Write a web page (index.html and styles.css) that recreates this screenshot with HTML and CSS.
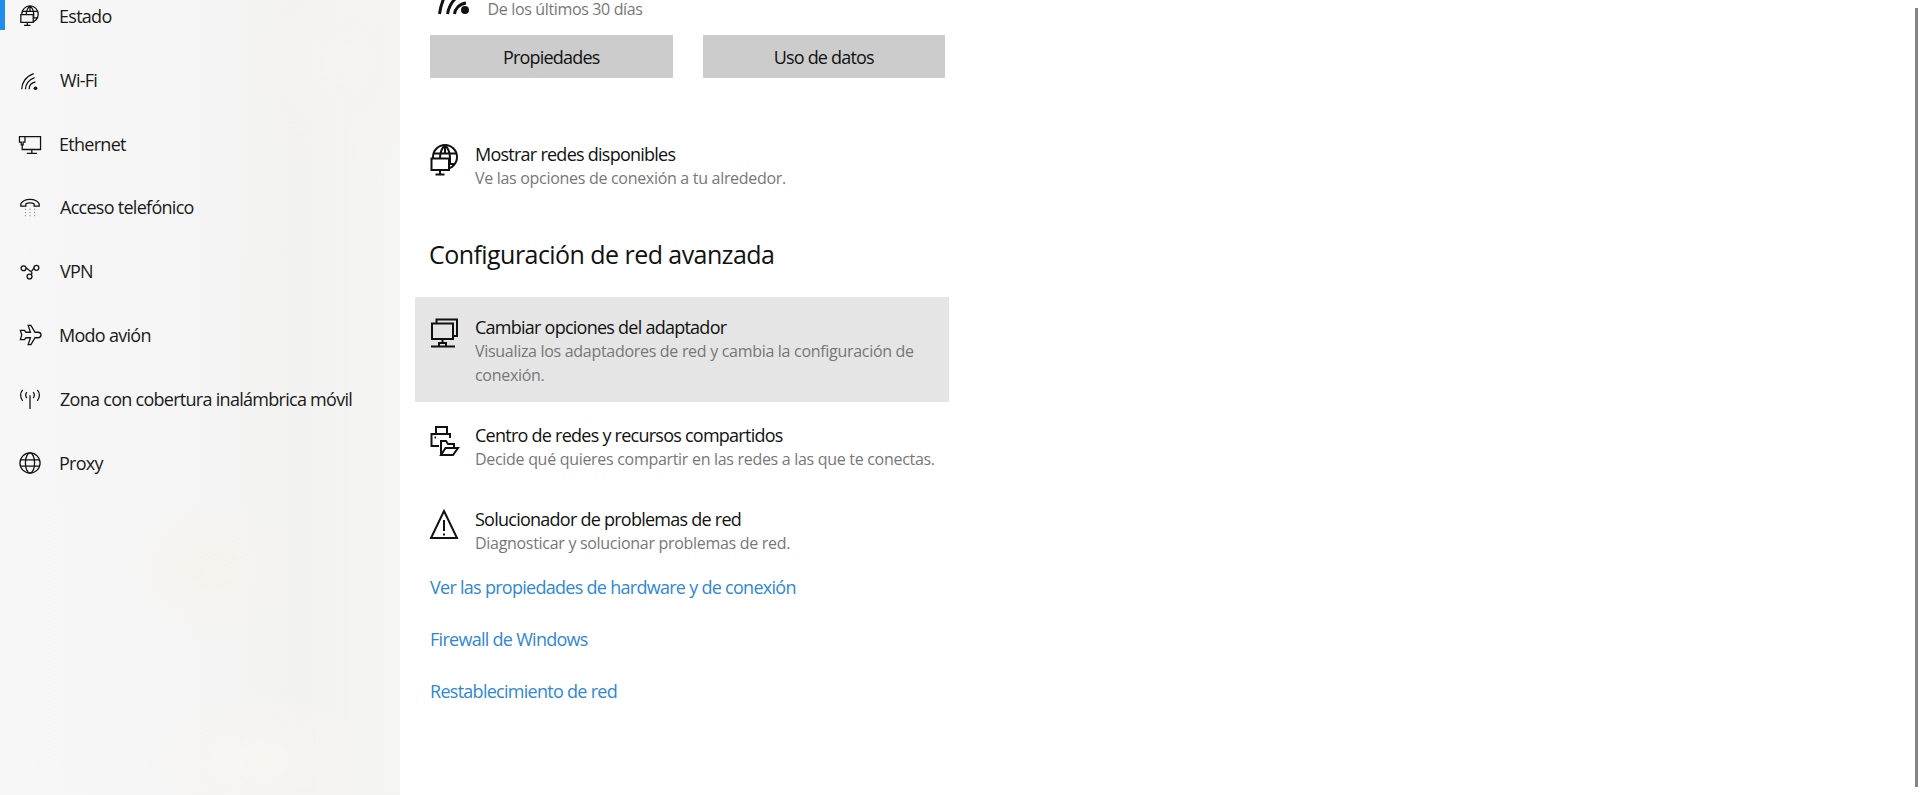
FILE: index.html
```html
<!DOCTYPE html>
<html lang="es">
<head>
<meta charset="utf-8">
<title>Estado de red</title>
<link rel="stylesheet" href="styles.css">
</head>
<body>
<div class="app">
  <nav class="sidebar">
    <a class="nav-item active">
      <svg class="nav-icon" viewBox="0 0 24 24"><circle cx="12" cy="10" r="9"/><path d="M3.600 7H20.400M12 1V7M12 1C9 3.500 8 6.500 8 10M12 1C15 3.500 16 6.500 16 10V14H20"/><path class="fill-bg" d="M2 10.500H15.500V19H2Z"/><path d="M9 19V22M5.500 22.300H12.500"/></svg>
      <span>Estado</span>
    </a>
    <a class="nav-item">
      <svg class="nav-icon" viewBox="0 0 24 24"><path d="M3 22C3 15 7.500 8 16 5M7 22C7 17 10.500 11.500 17 9.500M11 22C11 18.500 13.500 15 18 14"/><circle class="dot" cx="18" cy="21" r="2"/></svg>
      <span class="nudge">Wi-Fi</span>
    </a>
    <a class="nav-item">
      <svg class="nav-icon" viewBox="0 0 24 24"><path d="M6.500 4H23.500V18H6.500M0.500 10V4H6.500V10H4.500V13H2.500V10ZM3.500 13V18H6.500M14 18V22M8.500 22.300H19.500"/></svg>
      <span>Ethernet</span>
    </a>
    <a class="nav-item">
      <svg class="nav-icon" viewBox="0 0 24 24"><path d="M2 11V8.500C5.500 2 18.500 2 22 8.500V11H16.500V8.500C14.500 7.300 9.500 7.300 7.500 8.500V11Z"/><path class="dots" d="M7 14V15M12 14V15M17 14V15M7 17.500V18.500M12 17.500V18.500M17 17.500V18.500M7 21V22M12 21V22M17 21V22"/></svg>
      <span class="nudge">Acceso telefónico</span>
    </a>
    <a class="nav-item">
      <svg class="nav-icon" viewBox="0 0 24 24"><circle cx="5" cy="9" r="2.700"/><circle cx="19" cy="8.500" r="2.700"/><circle cx="11.500" cy="18" r="2.700"/><path d="M7.700 9C10 9 11 12.500 13 12.500C15 12.500 15.500 9 16.300 8.500M13.500 16C15 14 13.500 12.500 11.500 11.500"/></svg>
      <span class="nudge">VPN</span>
    </a>
    <a class="nav-item">
      <svg class="nav-icon" viewBox="0 0 24 24"><path d="M10 1.500H13L17.500 9H20.500C22.500 9 24 10.500 24 12C24 13.500 22.500 15 20.500 15H17.500L13 22.500H10L12.500 15H7.500L6 17H1.500L3 12L1.500 7H6L7.500 9H12.500Z"/></svg>
      <span>Modo avión</span>
    </a>
    <a class="nav-item">
      <svg class="nav-icon" viewBox="0 0 24 24"><path d="M12 8V23M8.500 4.500C7 6.500 7 9 8.500 11M15.500 4.500C17 6.500 17 9 15.500 11M4 2C1 5.500 1 10.500 4 14M20 2C23 5.500 23 10.500 20 14"/></svg>
      <span class="nudge">Zona con cobertura inalámbrica móvil</span>
    </a>
    <a class="nav-item">
      <svg class="nav-icon" viewBox="0 0 24 24"><circle cx="12" cy="12" r="11"/><ellipse cx="12" cy="12" rx="5" ry="11"/><path d="M1.500 8.500H22.500M1.500 15.500H22.500"/></svg>
      <span>Proxy</span>
    </a>
  </nav>

  <main class="content">
    <div class="usage">
      <svg class="usage-icon" viewBox="0 0 36 36"><path d="M5.500 34C6.500 27 8 21 12 14M13.500 34C14.500 28 17 23 21 19M20.500 34C21 29 25 24 32 23"/><circle class="dot" cx="31" cy="30" r="4"/></svg>
      <span class="desc">De los últimos 30 días</span>
    </div>
    <div class="buttons">
      <button class="btn">Propiedades</button>
      <button class="btn">Uso de datos</button>
    </div>

    <div class="option show-networks">
      <svg class="opt-icon" viewBox="0 0 28 32"><circle cx="15" cy="13" r="12"/><path d="M3.500 9.500H26.500M15 1V9.500M15 1C11 5 10 9 10 14M15 1C19 5 20 9 20 14V20H25"/><path class="fill-bg" d="M1.500 14.500H19V26H1.500Z"/><path d="M10 26V30M5.500 30.500H14.500"/></svg>
      <div class="opt-text">
        <div class="title">Mostrar redes disponibles</div>
        <div class="desc">Ve las opciones de conexión a tu alrededor.</div>
      </div>
    </div>

    <h2 class="heading">Configuración de red avanzada</h2>

    <div class="option highlighted">
      <svg class="opt-icon" viewBox="0 0 28 32"><path d="M6.500 6V2.500H27V19H22.500"/><path d="M2 6.500H23V22H2Z"/><path d="M12.500 22V26M9 29.500V26H16V29.500ZM1 29.500H9M16 29.500H25"/></svg>
      <div class="opt-text">
        <div class="title">Cambiar opciones del adaptador</div>
        <div class="desc">Visualiza los adaptadores de red y cambia la configuración de conexión.</div>
      </div>
    </div>

    <div class="option shared">
      <svg class="opt-icon" viewBox="0 0 28 32"><path d="M6 9V2H17V9M9 21H1.500V9H20V13"/><path d="M4.500 12.500H6"/><path d="M11 30V16H16L18 19H24V23"/><path d="M11 30H23L28 23H15.500Z"/></svg>
      <div class="opt-text">
        <div class="title">Centro de redes y recursos compartidos</div>
        <div class="desc">Decide qué quieres compartir en las redes a las que te conectas.</div>
      </div>
    </div>

    <div class="option troubleshoot">
      <svg class="opt-icon" viewBox="0 0 28 32"><path d="M14 2L27 29H1Z"/><path d="M14 11V22M14 24.500V26.500"/></svg>
      <div class="opt-text">
        <div class="title">Solucionador de problemas de red</div>
        <div class="desc">Diagnosticar y solucionar problemas de red.</div>
      </div>
    </div>

    <div class="links">
      <a class="link">Ver las propiedades de hardware y de conexión</a>
      <a class="link">Firewall de Windows</a>
      <a class="link">Restablecimiento de red</a>
    </div>
  </main>

  <div class="scrollbar"></div>
</div>
</body>
</html>
```

FILE: styles.css
```css
* { box-sizing: border-box; }
html, body { margin: 0; height: 100%; overflow: hidden; background: #fff; }
body { font-family: "Open Sans", "Liberation Sans", sans-serif; color: #111; }

.app { display: flex; height: 795px; position: relative; }

.sidebar {
  width: 400px;
  flex: none;
  overflow: hidden;
  background:
    radial-gradient(ellipse 90px 70px at 215px 570px, #f7f3ee 0%, rgba(247,243,238,0) 100%),
    radial-gradient(ellipse 110px 130px at 340px 60px, #f6f3f0 0%, rgba(246,243,240,0) 100%),
    radial-gradient(ellipse 120px 70px at 260px 760px, #f8f5f1 0%, rgba(248,245,241,0) 100%),
    linear-gradient(90deg, #f7f7f7 0%, #f5f5f5 45%, #f2f2f1 75%, #f5f5f4 100%);
}

.nav-item {
  display: flex;
  align-items: center;
  height: 63.85px;
  position: relative;
  padding-left: 19px;
  gap: 18px;
  font-size: 18px;
  letter-spacing: -0.72px;
  color: #1a1a1a;
}
.nav-item:first-child { margin-top: -16px; }
.nav-item.active::before {
  content: "";
  position: absolute;
  left: 0;
  top: 0;
  width: 5px;
  height: 46px;
  background: #1f8cf0;
}
.nudge { margin-left: 1px; }
.nav-icon { width: 22px; height: 22px; flex: none; }

svg { fill: none; stroke: #111; stroke-width: 1.4; overflow: visible; }
svg .dot { fill: #111; stroke: none; }
svg .dots { stroke-width: 1; stroke: #666; }
svg .fill-bg { fill: #f6f6f6; }
.opt-icon .fill-bg { fill: #fff; }
.opt-icon { stroke-width: 2; width: 28px; height: 32px; flex: none; }

.content { width: 560px; flex: none; padding-left: 30px; }

.usage {
  display: flex;
  align-items: flex-end;
  height: 18px;
}
.usage-icon { width: 36px; height: 36px; flex: none; margin-left: 3.5px; margin-bottom: 2px; stroke-width: 3; }
.usage .desc { margin-left: 18px; line-height: 18px; letter-spacing: -0.35px; }

.title { font-size: 18px; letter-spacing: -0.75px; line-height: 24px; color: #111; }
.desc { font-size: 16px; letter-spacing: -0.3px; line-height: 24px; color: #777; }

.buttons { display: flex; gap: 30px; margin-top: 17px; }
.btn {
  width: 242.5px;
  height: 43px;
  flex: none;
  border: 0;
  padding: 0;
  background: #ccc;
  font: inherit;
  font-size: 18px;
  letter-spacing: -0.8px;
  color: #111;
}

.option { display: flex; gap: 17px; width: 534px; margin-left: -15px; padding-left: 15px; }
.option .opt-icon { margin-top: 2px; }
.opt-text { flex: 1; padding-right: 14px; }

.show-networks { margin-top: 64px; }
.heading {
  margin: 47px 0 0 -1px;
  font-size: 25px;
  font-weight: 400;
  letter-spacing: -0.55px;
  line-height: 34px;
  color: #111;
}
.highlighted { margin-top: 26px; background: #e5e5e5; padding-top: 18px; height: 105px; }
.shared { margin-top: 21px; }
.troubleshoot { margin-top: 36px; }

.links { display: flex; flex-direction: column; gap: 28px; margin-top: 20px; }
.link { font-size: 18px; letter-spacing: -0.72px; line-height: 24px; color: #2f87d6; }

.scrollbar { position: absolute; right: 2px; top: 8px; bottom: 8px; width: 3px; background: #858585; }
```
